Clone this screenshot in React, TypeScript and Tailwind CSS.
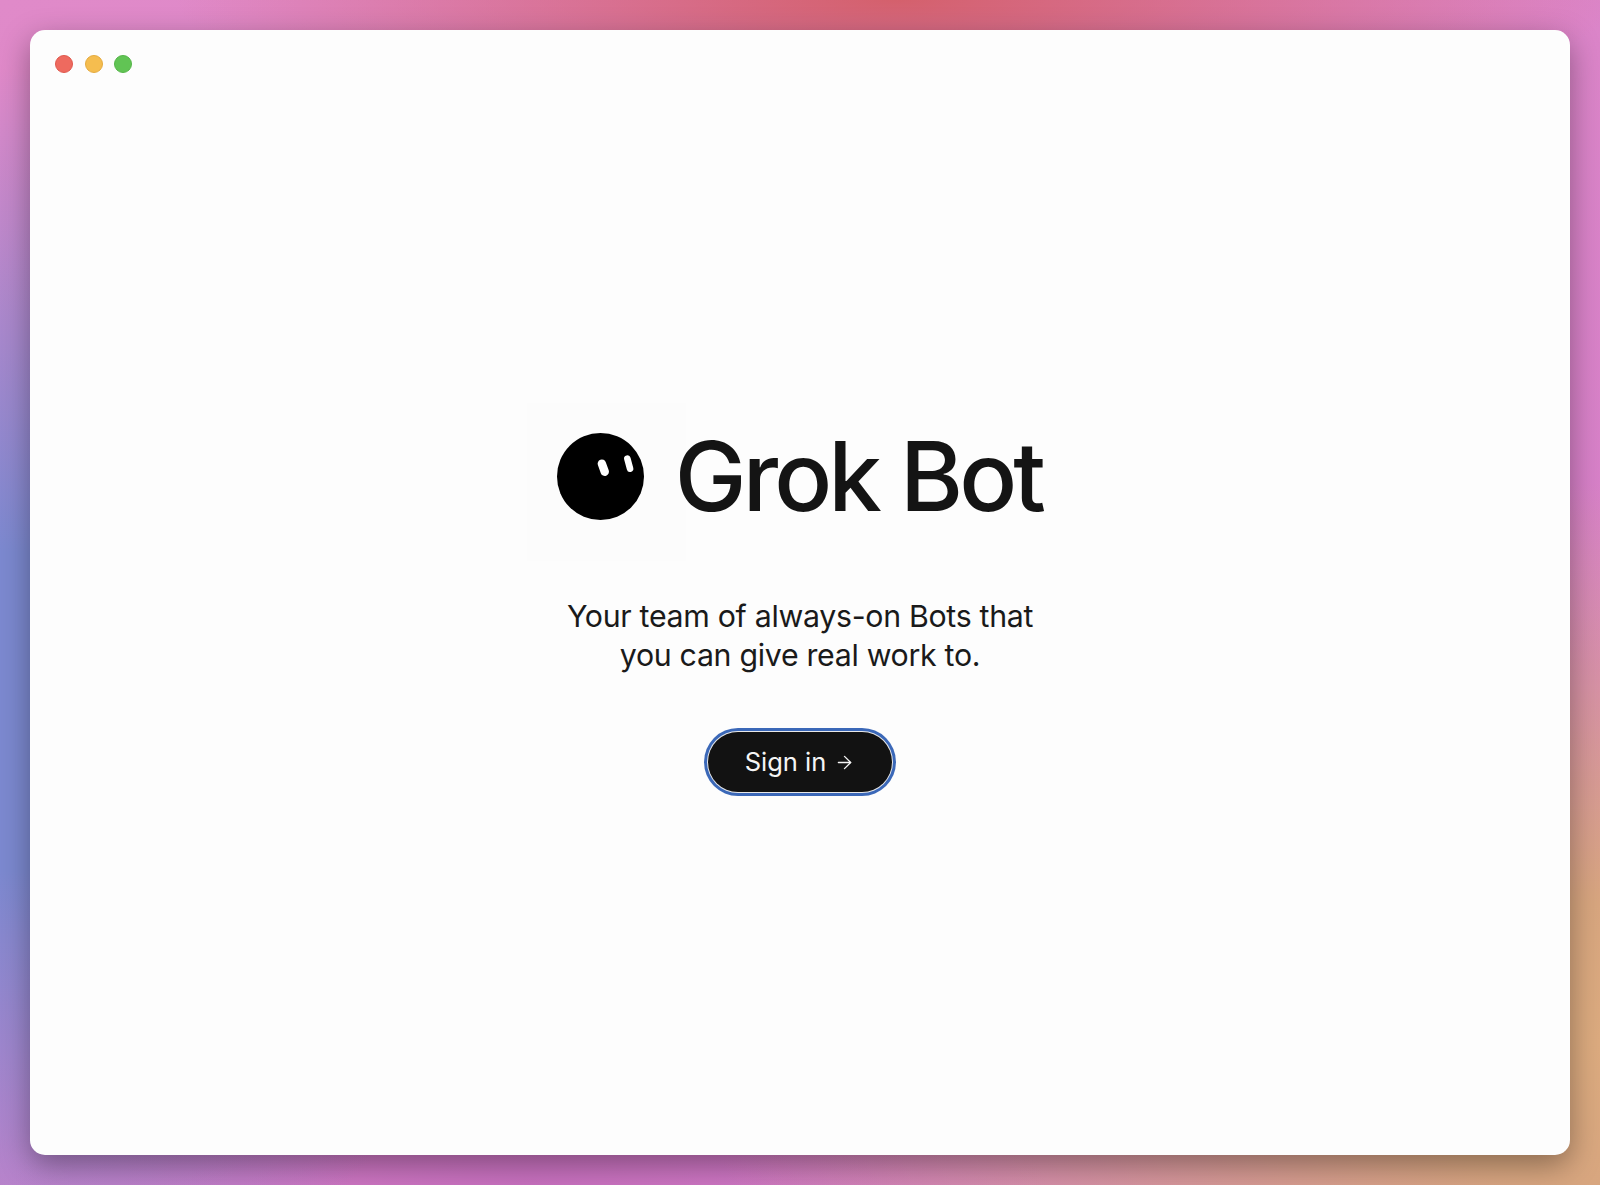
import { ArrowRight } from 'lucide-react';

// desktop wallpaper behind the window, stacked blobs over a pink base
const wallpaper =
    'bg-[radial-gradient(ellipse_720px_130px_at_56%_0%,#d4606c_0%,transparent_100%),radial-gradient(ellipse_520px_640px_at_0%_60%,#7c89d0_0%,#7c89d0_25%,transparent_100%),radial-gradient(ellipse_900px_560px_at_100%_88%,#dcab7f_0%,#d8a67f_25%,transparent_100%),radial-gradient(ellipse_520px_140px_at_33%_100%,#c870bf_0%,transparent_100%),linear-gradient(160deg,#e08ac9_0%,#d27bc8_100%)]';

function Logo() {
    return (
        <div className="w-[159px] h-[158px] shrink-0 bg-[#fcfcfc] pl-[30px] pt-[30px]">
            <svg viewBox="0 0 87 87" className="w-[87px] h-[87px]">
                <circle cx="43.5" cy="43.5" r="43.5" fill="#000" />
                <rect x="42.1" y="26.2" width="8.4" height="17" rx="4.2" fill="#fff" transform="rotate(-20 46.3 34.7)" />
                <rect x="68.4" y="22.2" width="6.6" height="17" rx="3.3" fill="#fff" transform="rotate(-15 71.7 30.7)" />
            </svg>
        </div>
    );
}

export default function App() {
    return (
        <div className={`h-[1185px] w-full p-[30px] ${wallpaper}`} style={{ fontFamily: 'Inter, sans-serif' }}>
            <div className="h-[1125px] w-[1540px] rounded-[15px] bg-[#fdfdfd] shadow-[0_10px_30px_rgba(0,0,0,0.36)] flex flex-col">
                <div className="flex gap-[11.5px] pl-[25px] pt-[25px]">
                    <span className="w-[18px] h-[18px] rounded-full bg-[#ee6a5f] border border-[#e0584d]" />
                    <span className="w-[18px] h-[18px] rounded-full bg-[#f5bd4f] border border-[#e5ab3f]" />
                    <span className="w-[18px] h-[18px] rounded-full bg-[#61c454] border border-[#54b548]" />
                </div>

                <div className="flex flex-col items-center pt-[330px]">
                    <div className="flex items-start mr-[31px]">
                        <Logo />
                        <h1 className="-ml-[11px] mt-[23px] text-[96px] leading-[100px] font-[550] tracking-[-0.04em] text-[#141414]">
                            Grok Bot
                        </h1>
                    </div>

                    <p className="mt-[35.5px] text-center text-[30.3px] leading-[39px] text-[#1a1a1a] tracking-[-0.01em]">
                        Your team of always-on Bots that
                        <br />
                        you can give real work to.
                    </p>

                    <button className="mt-[57.5px] w-[184px] h-[60px] rounded-full bg-[#121212] text-[#f5f5f5] text-[25.5px] flex items-center justify-center gap-[8px] shadow-[0_0_0_1px_#e8e8e8,0_0_0_4px_#3b68b8]">
                        Sign in
                        <ArrowRight className="w-[21px] h-[21px]" strokeWidth={1.5} />
                    </button>
                </div>
            </div>
        </div>
    );
}
